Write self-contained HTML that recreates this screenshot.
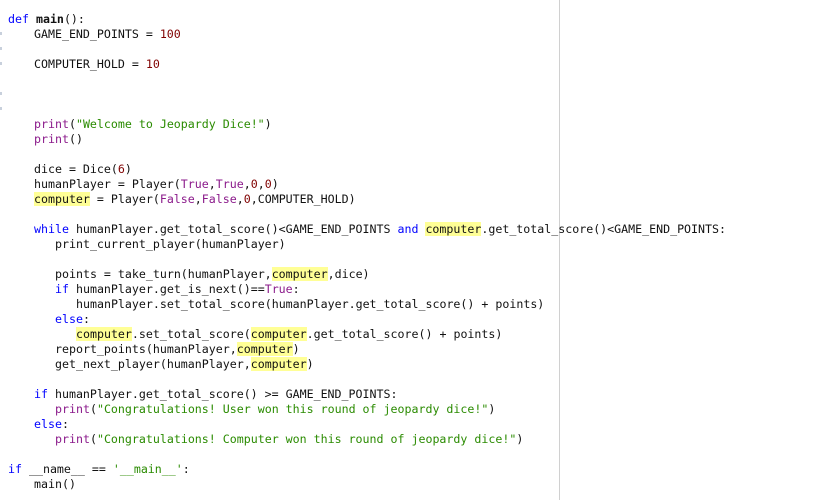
<!DOCTYPE html>
<html><head><style>
body{margin:0;width:815px;height:500px;background:#fff;overflow:hidden;position:relative;font-family:"DejaVu Sans Mono","Liberation Mono",monospace;font-size:11.62px;color:#111}
.l{position:absolute;white-space:pre;line-height:15px;height:15px}
.k{color:#0000ff}.s{color:#2a8b00}.n{color:#800000}.b{color:#8b1a8b}.h{background:#ffff96}
.vl{position:absolute;left:559px;top:0;width:1px;height:500px;background:#d0d0d0}
.g{position:absolute;left:0;width:2px;height:3px;background:#c8d0dc}
</style></head><body>
<div class="vl"></div>
<div class="l" style="left:8px;top:12px"><span class="k">def</span> <b>main</b>():</div>
<div class="l" style="left:34px;top:27px">GAME_END_POINTS = <span class="n">100</span></div>
<div class="l" style="left:34px;top:57px">COMPUTER_HOLD = <span class="n">10</span></div>
<div class="l" style="left:34px;top:117px"><span class="b">print</span>(<span class="s">"Welcome to Jeopardy Dice!"</span>)</div>
<div class="l" style="left:34px;top:132px"><span class="b">print</span>()</div>
<div class="l" style="left:34px;top:162px">dice = Dice(<span class="n">6</span>)</div>
<div class="l" style="left:34px;top:177px">humanPlayer = Player(<span class="b">True</span>,<span class="b">True</span>,<span class="n">0</span>,<span class="n">0</span>)</div>
<div class="l" style="left:34px;top:192px"><span class="h">computer</span> = Player(<span class="b">False</span>,<span class="b">False</span>,<span class="n">0</span>,COMPUTER_HOLD)</div>
<div class="l" style="left:34px;top:222px"><span class="k">while</span> humanPlayer.get_total_score()&lt;GAME_END_POINTS <span class="k">and</span> <span class="h">computer</span>.get_total_score()&lt;GAME_END_POINTS:</div>
<div class="l" style="left:55px;top:237px">print_current_player(humanPlayer)</div>
<div class="l" style="left:55px;top:267px">points = take_turn(humanPlayer,<span class="h">computer</span>,dice)</div>
<div class="l" style="left:55px;top:282px"><span class="k">if</span> humanPlayer.get_is_next()==<span class="b">True</span>:</div>
<div class="l" style="left:76px;top:297px">humanPlayer.set_total_score(humanPlayer.get_total_score() + points)</div>
<div class="l" style="left:55px;top:312px"><span class="k">else</span>:</div>
<div class="l" style="left:76px;top:327px"><span class="h">computer</span>.set_total_score(<span class="h">computer</span>.get_total_score() + points)</div>
<div class="l" style="left:55px;top:342px">report_points(humanPlayer,<span class="h">computer</span>)</div>
<div class="l" style="left:55px;top:357px">get_next_player(humanPlayer,<span class="h">computer</span>)</div>
<div class="l" style="left:34px;top:387px"><span class="k">if</span> humanPlayer.get_total_score() &gt;= GAME_END_POINTS:</div>
<div class="l" style="left:55px;top:402px"><span class="b">print</span>(<span class="s">"Congratulations! User won this round of jeopardy dice!"</span>)</div>
<div class="l" style="left:34px;top:417px"><span class="k">else</span>:</div>
<div class="l" style="left:55px;top:432px"><span class="b">print</span>(<span class="s">"Congratulations! Computer won this round of jeopardy dice!"</span>)</div>
<div class="l" style="left:8px;top:462px"><span class="k">if</span> __name__ == <span class="s">'__main__'</span>:</div>
<div class="l" style="left:34px;top:477px">main()</div>
<div class="g" style="top:32px"></div><div class="g" style="top:47px"></div><div class="g" style="top:62px"></div><div class="g" style="top:92px"></div><div class="g" style="top:107px"></div>
</body></html>
